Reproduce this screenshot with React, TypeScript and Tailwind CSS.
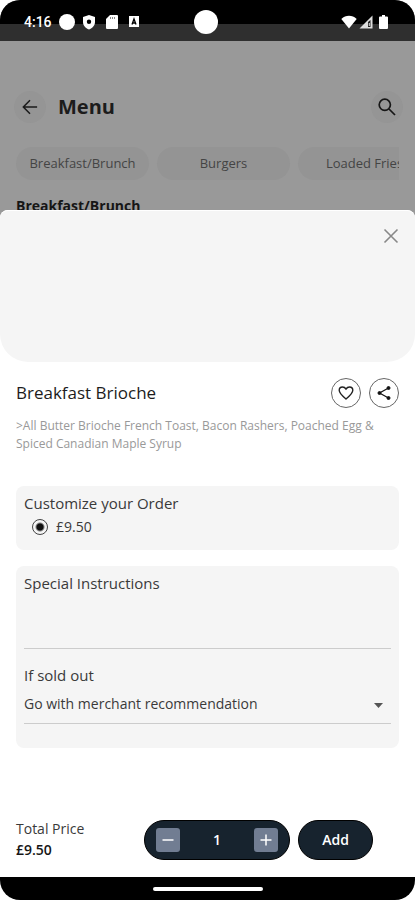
import { useState } from 'react'

const categories = ['Breakfast/Brunch', 'Burgers', 'Loaded Fries']

const StatusBar = () => (
  <div className="flex h-[41px] shrink-0 items-center rounded-t-[20px] bg-[linear-gradient(#000_24px,#2f2f2f_24px)] px-6 pt-[2px] text-white">
    <div className="flex flex-1 items-center gap-[7px]">
      <span className="font-[Roboto,sans-serif] text-sm leading-5 font-medium">4:16</span>
      <span className="size-4 rounded-full bg-white" />
      <svg className="h-4 w-[14px]" viewBox="0 0 14 16" fill="currentColor">
        <path fillRule="evenodd" d="M7 1 13 3v5c0 3.500-2.500 6-6 7.500C3.500 14 1 11.500 1 8V3zM7 5.500a2.200 2.200 0 1 0 0 4.400 2.200 2.200 0 0 0 0-4.400z" />
      </svg>
      <svg className="ml-[2px] h-[14px] w-[14px]" viewBox="0 0 14 14" fill="currentColor">
        <path d="M5 0h7a1 1 0 0 1 1 1v12a1 1 0 0 1-1 1H2a1 1 0 0 1-1-1V4z" />
        <path d="M5.500 2v2M7.500 2v2M9.500 2v2" stroke="#888" strokeWidth="1" />
      </svg>
      <svg className="ml-[2px] h-3 w-3" viewBox="0 0 12 12">
        <path d="M1 0h10v11H1z" fill="#fff" />
        <path d="M4 8.500 6 3l2 5.500M4.700 7h2.600" fill="none" stroke="#000" strokeWidth="1.300" />
      </svg>
    </div>
    <span className="size-6 shrink-0 rounded-full bg-white" />
    <div className="flex flex-1 items-center justify-end gap-[2px] pr-[3px]">
      <svg className="h-[14px] w-4" viewBox="0 0 16 14" fill="currentColor">
        <path d="M8 13.500.3 4C4.800-.2 11.200-.2 15.700 4z" />
      </svg>
      <svg className="h-[14px] w-[14px]" viewBox="0 0 14 14">
        <path d="M13.500.5v13H.5z" fill="#ddd" />
        <path d="M9 7 11.500 5v7H9z" fill="#222" />
        <path d="M10.300 8v3" stroke="#ddd" />
      </svg>
      <svg className="ml-1 h-[14px] w-[9px]" viewBox="0 0 9 14" fill="currentColor">
        <path d="M3 0h3v1.500h2a1 1 0 0 1 1 1V13a1 1 0 0 1-1 1H1a1 1 0 0 1-1-1V2.500a1 1 0 0 1 1-1h2z" />
      </svg>
    </div>
  </div>
)

const MenuBackdrop = () => (
  <div className="h-[169px] shrink-0 overflow-hidden px-4 pt-[50px]">
    <div className="flex h-8 items-center">
      <button aria-label="Back" className="-ml-[2px] flex size-8 items-center justify-center rounded-full bg-[#959595]">
        <svg className="size-4" viewBox="0 0 18 18" fill="none" stroke="#1a1a1a" strokeWidth="1.700">
          <path d="M17 9H2M9 1.500 1.500 9 9 16.500" />
        </svg>
      </button>
      <h1 className="ml-3 text-xl font-bold text-[#1c1c1c]">Menu</h1>
      <button aria-label="Search" className="-mr-1 ml-auto flex size-8 items-center justify-center rounded-full bg-[#959595]">
        <svg className="size-[18px]" viewBox="0 0 18 18" fill="none" stroke="#161616" strokeWidth="1.700">
          <circle cx="6.800" cy="6.800" r="5.600" />
          <path d="m11 11 6 6" />
        </svg>
      </button>
    </div>
    <nav className="mt-6 flex gap-2 overflow-hidden">
      {categories.map((name) => (
        <button key={name} className="h-[33px] w-[133px] shrink-0 rounded-full bg-[#949494] text-[13px] whitespace-nowrap text-[#444]">
          {name}
        </button>
      ))}
    </nav>
    <h2 className="mt-4 text-sm leading-5 font-bold text-[#161616]">Breakfast/Brunch</h2>
  </div>
)

const App = () => {
  const [quantity, setQuantity] = useState(1)
  const total = (9.5 * quantity).toFixed(2)

  return (
    <div className="flex min-h-screen flex-col bg-white font-['Open_Sans',sans-serif] text-[#3a3a3a]">
      <div className="flex flex-col rounded-t-[20px] bg-[#999]">
        <StatusBar />
        <MenuBackdrop />
        <div className="rounded-t-lg bg-white">
          <div className="flex h-[152px] items-start justify-end rounded-t-lg rounded-b-[28px] border-t border-white bg-[#f5f5f5] pt-[17px] pr-4">
            <button aria-label="Close" className="flex size-4 items-center justify-center">
              <svg className="size-4" viewBox="0 0 16 16" fill="none" stroke="#888" strokeWidth="1.600">
                <path d="m1.500 1.500 13 13M14.500 1.500l-13 13" />
              </svg>
            </button>
          </div>
        </div>
      </div>

      <main className="flex flex-1 flex-col px-4 pt-4">
        <div className="flex items-center gap-2">
          <h2 className="flex-1 text-[17px] leading-6 text-[#1c1c1c]">Breakfast Brioche</h2>
          <button aria-label="Favourite" className="flex size-[30px] items-center justify-center rounded-full border border-[#666]">
            <svg className="size-4" viewBox="0 0 16 16" fill="none" stroke="#222" strokeWidth="1.400">
              <path d="M8 14C3.500 10.300 1.200 8 1.200 5.300 1.200 3.300 2.700 2 4.500 2 6 2 7.200 2.800 8 4c.8-1.200 2-2 3.500-2 1.800 0 3.300 1.300 3.300 3.300C14.800 8 12.500 10.300 8 14z" />
            </svg>
          </button>
          <button aria-label="Share" className="flex size-[30px] items-center justify-center rounded-full border border-[#666]">
            <svg className="size-4" viewBox="0 0 16 16" fill="#111" stroke="#111">
              <path d="M12.500 3 3.500 8l9 5" fill="none" strokeWidth="1.200" />
              <circle cx="12.500" cy="3" r="1.500" />
              <circle cx="3.500" cy="8" r="1.500" />
              <circle cx="12.500" cy="13" r="1.500" />
            </svg>
          </button>
        </div>
        <p className="mt-[9px] text-xs leading-[18px] text-[#999]">
          &gt;All Butter Brioche French Toast, Bacon Rashers, Poached Egg &amp; Spiced Canadian Maple Syrup
        </p>

        <fieldset className="mt-[33px] h-16 rounded-lg bg-[#f5f5f5] px-2 pt-[6px]">
          <legend className="float-left w-full text-[15px] leading-[22px]">Customize your Order</legend>
          <label className="flex items-center gap-2 pl-2 text-sm leading-[26px]">
            <input
              type="radio"
              name="size"
              defaultChecked
              className="size-4 appearance-none rounded-full border border-[#444] bg-[radial-gradient(circle,#111_3px,transparent_5px)]"
            />
            £9.50
          </label>
        </fieldset>

        <section className="mt-4 flex flex-col rounded-lg bg-[#f5f5f5] px-2 pt-[6px] pb-6">
          <label htmlFor="instructions" className="text-[15px] leading-[22px]">Special Instructions</label>
          <textarea id="instructions" className="h-[55px] resize-none border-b border-[#ccc] outline-none" />
          <label htmlFor="sold-out" className="mt-4 text-[15px] leading-5">If sold out</label>
          <div className="relative mt-1">
            <select id="sold-out" className="h-[35px] w-full appearance-none border-b border-[#ccc] pb-1 text-sm outline-none">
              <option>Go with merchant recommendation</option>
            </select>
            <svg className="pointer-events-none absolute top-[14px] right-2 h-[5px] w-[9px]" viewBox="0 0 9 5" fill="#555">
              <path d="M0 0h9L4.500 5z" />
            </svg>
          </div>
        </section>

        <footer className="mt-auto mb-[17px] flex h-10 items-center">
          <div className="w-32">
            <p className="text-sm leading-5">Total Price</p>
            <p className="text-sm leading-[22px] font-semibold text-[#161616]">£{total}</p>
          </div>
          <div className="flex h-10 w-[146px] items-center justify-between rounded-full border border-black bg-[#17232e] px-[11px] text-sm font-semibold text-white">
            <button
              aria-label="Decrease"
              onClick={() => setQuantity(Math.max(1, quantity - 1))}
              className="flex size-6 items-center justify-center rounded-[3px] bg-[#717d92]"
            >
              <svg className="size-3" viewBox="0 0 12 12" stroke="#fff" strokeWidth="1.500"><path d="M.5 6h11" /></svg>
            </button>
            <span>{quantity}</span>
            <button
              aria-label="Increase"
              onClick={() => setQuantity(quantity + 1)}
              className="flex size-6 items-center justify-center rounded-[3px] bg-[#717d92]"
            >
              <svg className="size-3" viewBox="0 0 12 12" stroke="#fff" strokeWidth="1.500"><path d="M.5 6h11M6 .5v11" /></svg>
            </button>
          </div>
          <button className="ml-2 h-10 w-[75px] rounded-full border border-black bg-[#17232e] text-sm font-semibold text-white">Add</button>
        </footer>
      </main>

      <div className="flex h-[23px] shrink-0 items-center justify-center rounded-b-[20px] bg-black">
        <span className="h-1 w-[110px] rounded-full bg-white" />
      </div>
    </div>
  )
}

export default App
